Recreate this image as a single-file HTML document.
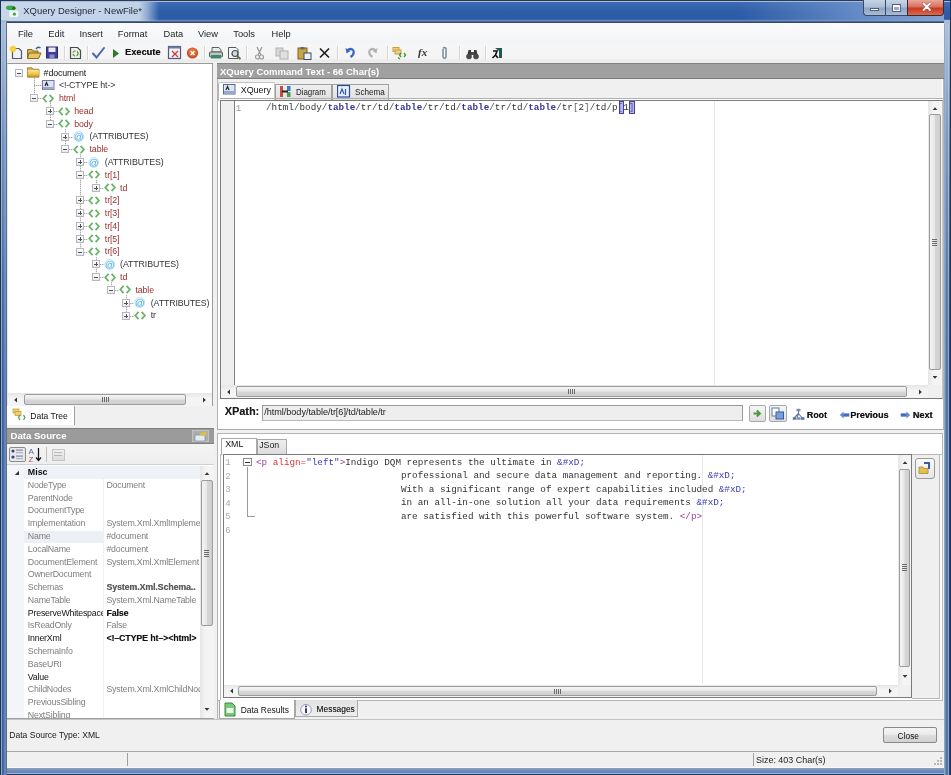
<!DOCTYPE html>
<html><head><meta charset="utf-8"><style>
html,body{margin:0;padding:0;width:951px;height:775px;overflow:hidden;background:#203a58}
#root{position:absolute;left:0;top:0;width:951px;height:775px;overflow:hidden;filter:blur(0.4px)}
div{position:absolute;box-sizing:border-box}
.t{white-space:pre;font-family:"Liberation Sans",sans-serif;}
svg{position:absolute}
</style></head><body>
<div id="root">
<div style="left:0px;top:0px;width:951px;height:775px;background:#5878b4"></div>
<div style="left:0px;top:23px;width:1px;height:752px;background:#1a3550"></div>
<div style="left:1px;top:23px;width:1px;height:752px;background:#8aaac8"></div>
<div style="left:2px;top:23px;width:1px;height:752px;background:#40609c"></div>
<div style="left:3px;top:23px;width:1px;height:752px;background:#4a6aa8"></div>
<div style="left:4px;top:23px;width:1px;height:752px;background:#6080b8"></div>
<div style="left:5px;top:23px;width:1px;height:752px;background:#6a88b8"></div>
<div style="left:6px;top:23px;width:1px;height:752px;background:#5a7088"></div>
<div style="left:944px;top:23px;width:1px;height:752px;background:#90a8c0"></div>
<div style="left:945px;top:23px;width:1px;height:752px;background:#7090b8"></div>
<div style="left:946px;top:23px;width:1px;height:752px;background:#5070a8"></div>
<div style="left:947px;top:23px;width:1px;height:752px;background:#5474ac"></div>
<div style="left:948px;top:23px;width:1px;height:752px;background:#88aadc"></div>
<div style="left:949px;top:23px;width:1px;height:752px;background:#2a4262"></div>
<div style="left:950px;top:23px;width:1px;height:752px;background:#203550"></div>
<div style="left:1px;top:23px;width:5px;height:752px;background:linear-gradient(180deg,rgba(196,210,232,0.8) 0,rgba(196,210,232,0.4) 15%,rgba(196,210,232,0.08) 35%,rgba(196,210,232,0) 50%)"></div>
<div style="left:945px;top:23px;width:5px;height:752px;background:linear-gradient(180deg,rgba(196,210,232,0.8) 0,rgba(196,210,232,0.4) 15%,rgba(196,210,232,0.08) 35%,rgba(196,210,232,0) 50%)"></div>
<div style="left:7px;top:767px;width:937px;height:1px;background:#f8fafc"></div>
<div style="left:7px;top:768px;width:937px;height:1px;background:#90a0b0"></div>
<div style="left:7px;top:769px;width:937px;height:1px;background:#8098b8"></div>
<div style="left:7px;top:770px;width:937px;height:1px;background:#7090c0"></div>
<div style="left:7px;top:771px;width:937px;height:1px;background:#6a88c0"></div>
<div style="left:7px;top:772px;width:937px;height:1px;background:#6a88c0"></div>
<div style="left:7px;top:773px;width:937px;height:1px;background:#9ab4e4"></div>
<div style="left:7px;top:774px;width:937px;height:1px;background:#203a58"></div>
<div style="left:0px;top:0px;width:951px;height:23px;background:linear-gradient(180deg,#2a3a58 0,#2a3a58 1px,#a8bcd8 1px,#a8bcd8 2px,#3d6cb5 2px,#2f5ea8 11px,#2c5aa6 19px,#6f8fc0 21px,#34466a 22px,#34466a 23px)"></div>
<div style="left:1px;top:2px;width:160px;height:19px;background:linear-gradient(90deg,rgba(200,214,234,1) 0,rgba(194,210,230,1) 138px,rgba(170,192,222,0.8) 146px,rgba(120,150,200,0) 158px)"></div>
<div style="left:740px;top:2px;width:204px;height:19px;background:linear-gradient(90deg,rgba(120,156,208,0) 0,rgba(120,156,208,0.75) 60%,rgba(140,170,214,0.9) 100%)"></div>
<div style="left:1px;top:20px;width:6px;height:4px;background:#a9bcd8"></div>
<div style="left:944px;top:20px;width:6px;height:4px;background:#a9bcd8"></div>
<div style="left:6px;top:21px;width:1px;height:3px;background:#6a7f9c"></div>
<div style="left:0px;top:0px;width:1px;height:23px;background:#1a3550"></div>
<div style="left:950px;top:0px;width:1px;height:23px;background:#203550"></div>
<div style="left:7px;top:23px;width:937px;height:744px;background:#f0f0f0"></div>
<div style="left:943px;top:23px;width:1px;height:744px;background:#eef3f9"></div>
<svg style="position:absolute;left:5px;top:4px" width="16" height="15" viewBox="0 0 16 15"><ellipse cx="5.5" cy="3.7" rx="4.6" ry="2.3" fill="#40a850"/><circle cx="8.9" cy="4.3" r="1.7" fill="#2a6a1a"/><rect x="4.3" y="6.6" width="9" height="6.5" rx="1.5" fill="#eafaee"/><circle cx="9.4" cy="10.1" r="1.7" fill="#4aa84a"/></svg>
<div class="t" style="left:23.30px;top:5.77px;font-size:9.45px;line-height:9.45px;color:#1b2536;">XQuery Designer - NewFile*</div>
<div style="left:863px;top:0px;width:23px;height:16px;border:1px solid #3a4a66;border-top:none;border-radius:0 0 0 4px;background:linear-gradient(180deg,#c6d4e6 0,#aebfd6 45%,#8ea6c6 55%,#a8bcd8 100%)"></div>
<div style="left:885px;top:0px;width:23px;height:16px;border:1px solid #3a4a66;border-top:none;background:linear-gradient(180deg,#c6d4e6 0,#aebfd6 45%,#8ea6c6 55%,#a8bcd8 100%)"></div>
<div style="left:907px;top:0px;width:37px;height:16px;border:1px solid #3a2a2a;border-top:none;border-radius:0 0 4px 0;background:linear-gradient(180deg,#e8a898 0,#d87060 45%,#c83a22 55%,#d86a50 100%)"></div>
<div style="left:870px;top:8px;width:9px;height:3px;background:#fff;border:1px solid #52607a"></div>
<div style="left:892px;top:3.5px;width:9px;height:8px;border:1px solid #52607a;background:transparent"></div>
<div style="left:893px;top:4.5px;width:7px;height:6px;border:1px solid #fff;border-top-width:2px;background:#9aaccc"></div>
<svg style="position:absolute;left:920px;top:1px" width="14" height="12" viewBox="0 0 14 12"><path d="M3.5 2.5 L10 9 M10 2.5 L3.5 9" stroke="#7a2a1a" stroke-width="3" stroke-linecap="round" opacity="0.6"/><path d="M3.5 2.5 L10 9 M10 2.5 L3.5 9" stroke="#fff" stroke-width="1.9" stroke-linecap="round"/></svg>
<div style="left:7px;top:23px;width:937px;height:20px;background:linear-gradient(180deg,#fbfbfd 0,#f7f8fa 50%,#f3f4f6 100%)"></div>
<div class="t" style="left:18.00px;top:29.59px;font-size:9.3px;line-height:9.3px;color:#1e1e1e;">File</div>
<div class="t" style="left:48.30px;top:29.59px;font-size:9.3px;line-height:9.3px;color:#1e1e1e;">Edit</div>
<div class="t" style="left:79.50px;top:29.59px;font-size:9.3px;line-height:9.3px;color:#1e1e1e;">Insert</div>
<div class="t" style="left:117.80px;top:29.59px;font-size:9.3px;line-height:9.3px;color:#1e1e1e;">Format</div>
<div class="t" style="left:163.50px;top:29.59px;font-size:9.3px;line-height:9.3px;color:#1e1e1e;">Data</div>
<div class="t" style="left:198.00px;top:29.59px;font-size:9.3px;line-height:9.3px;color:#1e1e1e;">View</div>
<div class="t" style="left:233.30px;top:29.59px;font-size:9.3px;line-height:9.3px;color:#1e1e1e;">Tools</div>
<div class="t" style="left:271.50px;top:29.59px;font-size:9.3px;line-height:9.3px;color:#1e1e1e;">Help</div>
<div style="left:7px;top:43px;width:937px;height:20px;background:linear-gradient(180deg,#f6f6f6 0,#f4f4f4 80%,#e9e9e9 85%,#f0f0f0 100%)"></div>
<svg style="position:absolute;left:9px;top:45px" width="14" height="16" viewBox="0 0 14 16"><path d="M3.5 3.5 H10 L12.5 6 V13.5 H3.5 Z" fill="#f2f2fa" stroke="#4e586e" stroke-width="1.2"/><defs><radialGradient id="star"><stop offset="0" stop-color="#ffe060"/><stop offset="0.55" stop-color="#f8c820"/><stop offset="1" stop-color="#f8c820" stop-opacity="0"/></radialGradient></defs><circle cx="4" cy="4" r="4" fill="url(#star)"/></svg>
<svg style="position:absolute;left:26px;top:45px" width="16" height="16" viewBox="0 0 16 16"><path d="M1.5 4.5 H6 L7 6 H12 V13.5 H1.5 Z" fill="#d6b250" stroke="#8a6a20"/><path d="M3 8 H15 L12.5 13.5 H1.5 Z" fill="#e8c860" stroke="#8a6a20"/><path d="M10 4 Q12 1 14.5 3" stroke="#2a6a8a" stroke-width="1.4" fill="none"/></svg>
<svg style="position:absolute;left:45px;top:45px" width="14" height="16" viewBox="0 0 14 16"><rect x="1.5" y="2" width="11" height="11" fill="#3e3e9e" stroke="#2a2a6a"/><rect x="3.5" y="2.5" width="7" height="4.5" fill="#e8e8f8"/><rect x="4.5" y="9.5" width="5" height="3.5" fill="#8a8ac8"/></svg>
<div style="left:64px;top:46px;width:1px;height:14px;background:#d6d6d6"></div>
<div style="left:65px;top:46px;width:1px;height:14px;background:#fff"></div>
<svg style="position:absolute;left:69px;top:45px" width="13" height="16" viewBox="0 0 13 16"><path d="M1.5 2.5 H8.5 L11.5 5.5 V13.5 H1.5 Z" fill="#eef0ea" stroke="#4a4a4a" stroke-width="1.2"/><circle cx="6.5" cy="8.5" r="2.6" fill="none" stroke="#5a9a4a" stroke-width="1.3" stroke-dasharray="3 1.5"/></svg>
<div style="left:87px;top:46px;width:1px;height:14px;background:#d6d6d6"></div>
<div style="left:88px;top:46px;width:1px;height:14px;background:#fff"></div>
<svg style="position:absolute;left:91px;top:45px" width="15" height="16" viewBox="0 0 15 16"><path d="M2 8.5 L5.5 12.5 L13 3" stroke="#4a64b8" stroke-width="2" fill="none" stroke-linecap="round"/></svg>
<svg style="position:absolute;left:111px;top:45px" width="10" height="16" viewBox="0 0 10 16"><path d="M2 4 L8 8.5 L2 13 Z" fill="#2a7a2a"/></svg>
<div class="t" style="left:125.00px;top:47.94px;font-size:9.25px;line-height:9.25px;color:#111;font-weight:bold;text-shadow:0.3px 0 0 rgba(0,0,0,0.5)">Execute</div>
<svg style="position:absolute;left:167px;top:45px" width="16" height="16" viewBox="0 0 16 16"><rect x="1.5" y="1.5" width="12" height="12" fill="#f4f0f4" stroke="#4a5a80" stroke-width="1.2"/><rect x="1.5" y="1.5" width="12" height="2" fill="#6a7aa0"/><path d="M5 6 L11 12 M11 6 L5 12" stroke="#d03a3a" stroke-width="1.3"/></svg>
<svg style="position:absolute;left:186px;top:45px" width="14" height="16" viewBox="0 0 14 16"><circle cx="6.5" cy="8" r="5.6" fill="#c8502a"/><circle cx="6.5" cy="7.2" r="4.2" fill="#e0703a"/><path d="M4.6 6.1 L8.4 9.9 M8.4 6.1 L4.6 9.9" stroke="#fff" stroke-width="1.4"/></svg>
<div style="left:204px;top:46px;width:1px;height:14px;background:#d6d6d6"></div>
<div style="left:205px;top:46px;width:1px;height:14px;background:#fff"></div>
<svg style="position:absolute;left:208px;top:45px" width="16" height="16" viewBox="0 0 16 16"><path d="M4 2.5 H11 L13 5 V7 H4 Z" fill="#eaeaea" stroke="#606060"/><rect x="1.5" y="7" width="13" height="5" rx="1" fill="#bfc4c8" stroke="#505a5a"/><rect x="3" y="10" width="10" height="3.5" fill="#3a8a6a"/></svg>
<svg style="position:absolute;left:227px;top:45px" width="16" height="16" viewBox="0 0 16 16"><path d="M1.5 2.5 H9 L11 4.5 V13.5 H1.5 Z" fill="#f4f4f4" stroke="#5a5a5a"/><circle cx="8" cy="8.5" r="3" fill="#c8dce8" stroke="#4a4a4a" stroke-width="1.2"/><path d="M10 11 L13.5 14" stroke="#6a6a40" stroke-width="2"/></svg>
<div style="left:246px;top:46px;width:1px;height:14px;background:#d6d6d6"></div>
<div style="left:247px;top:46px;width:1px;height:14px;background:#fff"></div>
<svg style="position:absolute;left:254px;top:45px" width="11" height="16" viewBox="0 0 11 16"><path d="M3 2 L7 10 M8 2 L4 10" stroke="#9a9a9a" stroke-width="1.3"/><circle cx="3.5" cy="12" r="2" fill="none" stroke="#9a9a9a" stroke-width="1.2"/><circle cx="7.5" cy="12" r="2" fill="none" stroke="#9a9a9a" stroke-width="1.2"/></svg>
<svg style="position:absolute;left:275px;top:45px" width="14" height="16" viewBox="0 0 14 16"><rect x="1" y="3" width="7" height="8" fill="#d8d8d8" stroke="#b4b4b4"/><rect x="5" y="6" width="8" height="8" fill="#e0e0e0" stroke="#b0b0b0"/></svg>
<svg style="position:absolute;left:297px;top:45px" width="15" height="16" viewBox="0 0 15 16"><rect x="1" y="3" width="9" height="11" fill="#c8a640" stroke="#7a6020"/><rect x="3.5" y="2" width="4" height="2.5" fill="#6a6a6a"/><rect x="7" y="8" width="7" height="6.5" fill="#eef0f6" stroke="#3a4a70"/></svg>
<svg style="position:absolute;left:318px;top:45px" width="13" height="16" viewBox="0 0 13 16"><path d="M2 3.5 L11 12.5 M11 3.5 L2 12.5" stroke="#1a1a1a" stroke-width="1.6"/></svg>
<div style="left:337px;top:46px;width:1px;height:14px;background:#d6d6d6"></div>
<div style="left:338px;top:46px;width:1px;height:14px;background:#fff"></div>
<svg style="position:absolute;left:344px;top:45px" width="13" height="16" viewBox="0 0 13 16"><path d="M3 6 Q5 3 8.5 4.5 Q11 6.5 8.5 10.5 L6.5 12" stroke="#3a66c0" stroke-width="2.2" fill="none"/><path d="M1.5 3 L2.5 8.5 L6.5 6 Z" fill="#3a66c0"/></svg>
<svg style="position:absolute;left:366px;top:45px" width="13" height="16" viewBox="0 0 13 16"><path d="M10 6 Q8 3 4.5 4.5 Q2 6.5 4.5 10.5 L6.5 12" stroke="#b4b4b4" stroke-width="2.2" fill="none"/><path d="M11.5 3 L10.5 8.5 L6.5 6 Z" fill="#b4b4b4"/></svg>
<div style="left:387px;top:46px;width:1px;height:14px;background:#d6d6d6"></div>
<div style="left:388px;top:46px;width:1px;height:14px;background:#fff"></div>
<svg style="position:absolute;left:392px;top:45px" width="16" height="16" viewBox="0 0 16 16"><rect x="1" y="2.5" width="6" height="4" fill="#f0d080" stroke="#c8a040"/><rect x="3" y="5" width="6" height="4" fill="#f0d080" stroke="#c8a040"/><path d="M9 8 L7.5 10 L9 12 M12 8 L13.5 10 L12 12" stroke="#3a9a3a" stroke-width="1.3" fill="none"/><path d="M6 12.5 L8 14" stroke="#3a9a3a" stroke-width="1.2"/></svg>
<div class="t" style="left:418.00px;top:47.45px;font-size:11px;line-height:11px;color:#333;font-weight:bold;font-family:'Liberation Serif';"><i>fx</i></div>
<svg style="position:absolute;left:440px;top:45px" width="9" height="16" viewBox="0 0 9 16"><path d="M3 4 V12 Q4.5 14.5 6 12 V3.5 Q4.5 1.5 3 3.5" stroke="#7a8aa0" stroke-width="1.5" fill="none"/></svg>
<div style="left:459px;top:46px;width:1px;height:14px;background:#d6d6d6"></div>
<div style="left:460px;top:46px;width:1px;height:14px;background:#fff"></div>
<svg style="position:absolute;left:465px;top:45px" width="15" height="16" viewBox="0 0 15 16"><path d="M2 12 L3.5 5 H6 V12 Z M13 12 L11.5 5 H9 V12 Z" fill="#3a3a3a"/><circle cx="4" cy="11.5" r="2.8" fill="#4a4a4a"/><circle cx="11" cy="11.5" r="2.8" fill="#4a4a4a"/><rect x="6" y="7" width="3" height="3" fill="#4a4a4a"/></svg>
<div style="left:485px;top:46px;width:1px;height:14px;background:#d6d6d6"></div>
<div style="left:486px;top:46px;width:1px;height:14px;background:#fff"></div>
<svg style="position:absolute;left:490px;top:45px" width="14" height="16" viewBox="0 0 14 16"><path d="M5 3 H12 V13 H9 V6 Z" fill="#1f5a50"/><path d="M3 6 L7 6 L5.5 10 L8 13 M5.5 10 L2.5 13" stroke="#111" stroke-width="1.6" fill="none"/></svg>
<div style="left:7px;top:63px;width:206px;height:344px;background:#fff;border:1px solid #9a9a9a;border-left-color:#e4e8ee"></div>
<div style="left:34px;top:78px;width:1px;height:20px;background:repeating-linear-gradient(180deg,#a8a8a8 0,#a8a8a8 1px,#e0e0e0 1px,#e0e0e0 2px)"></div>
<div style="left:50px;top:103px;width:1px;height:21px;background:repeating-linear-gradient(180deg,#a8a8a8 0,#a8a8a8 1px,#e0e0e0 1px,#e0e0e0 2px)"></div>
<div style="left:65px;top:129px;width:1px;height:20px;background:repeating-linear-gradient(180deg,#a8a8a8 0,#a8a8a8 1px,#e0e0e0 1px,#e0e0e0 2px)"></div>
<div style="left:80px;top:154px;width:1px;height:98px;background:repeating-linear-gradient(180deg,#a8a8a8 0,#a8a8a8 1px,#e0e0e0 1px,#e0e0e0 2px)"></div>
<div style="left:96px;top:180px;width:1px;height:8px;background:repeating-linear-gradient(180deg,#a8a8a8 0,#a8a8a8 1px,#e0e0e0 1px,#e0e0e0 2px)"></div>
<div style="left:96px;top:257px;width:1px;height:20px;background:repeating-linear-gradient(180deg,#a8a8a8 0,#a8a8a8 1px,#e0e0e0 1px,#e0e0e0 2px)"></div>
<div style="left:111px;top:282px;width:1px;height:8px;background:repeating-linear-gradient(180deg,#a8a8a8 0,#a8a8a8 1px,#e0e0e0 1px,#e0e0e0 2px)"></div>
<div style="left:126px;top:295px;width:1px;height:21px;background:repeating-linear-gradient(180deg,#a8a8a8 0,#a8a8a8 1px,#e0e0e0 1px,#e0e0e0 2px)"></div>
<div style="left:15px;top:69px;width:8px;height:8px;border:1px solid #b4b8be;background:linear-gradient(180deg,#fff,#e8eaee)"></div>
<div style="left:17px;top:72.5px;width:4px;height:1px;background:#505050"></div>
<svg style="position:absolute;left:27px;top:67px" width="13" height="11" viewBox="0 0 13 11"><defs><linearGradient id="fg" x1="0" y1="0" x2="0" y2="1"><stop offset="0" stop-color="#f6e6a0"/><stop offset="0.6" stop-color="#f0c040"/><stop offset="1" stop-color="#b88a20"/></linearGradient></defs><path d="M0.5 0.8 H5 L6 2.2 H12 V10.2 H0.5 Z" fill="#d8b450" stroke="#9a7a28" stroke-width="0.8"/><rect x="0.8" y="3" width="11" height="7" fill="url(#fg)"/></svg>
<div class="t" style="left:43.60px;top:68.52px;font-size:8.8px;line-height:8.8px;color:#111;letter-spacing:-0.1px">#document</div>
<div style="left:34px;top:85px;width:8px;height:1px;background:repeating-linear-gradient(90deg,#a8a8a8 0,#a8a8a8 1px,#e0e0e0 1px,#e0e0e0 2px)"></div>
<svg style="position:absolute;left:42px;top:80px" width="13" height="11" viewBox="0 0 13 11"><rect x="0.5" y="0.5" width="11.5" height="9" fill="#dde4f2" stroke="#6a7aa6"/><rect x="1" y="7" width="10.5" height="2.5" fill="#9aa8cc"/><path d="M3 6 L4.5 2.5 L6 6" stroke="#222" stroke-width="1.2" fill="none"/></svg>
<div class="t" style="left:58.90px;top:81.30px;font-size:8.8px;line-height:8.8px;color:#333;letter-spacing:-0.1px">&lt;!-CTYPE ht-&gt;</div>
<div style="left:34px;top:98px;width:8px;height:1px;background:repeating-linear-gradient(90deg,#a8a8a8 0,#a8a8a8 1px,#e0e0e0 1px,#e0e0e0 2px)"></div>
<div style="left:30px;top:94px;width:8px;height:8px;border:1px solid #b4b8be;background:linear-gradient(180deg,#fff,#e8eaee)"></div>
<div style="left:32px;top:97.5px;width:4px;height:1px;background:#505050"></div>
<svg style="position:absolute;left:42px;top:93px" width="13" height="11" viewBox="0 0 13 11"><path d="M4.6 1.8 L1.3 5.5 L4.6 9.2" stroke="#6ab46a" stroke-width="1.8" fill="none"/><path d="M7.6 1.8 L10.9 5.5 L7.6 9.2" stroke="#6ab46a" stroke-width="1.8" fill="none"/></svg>
<div class="t" style="left:58.90px;top:94.08px;font-size:8.8px;line-height:8.8px;color:#9a2e2e;letter-spacing:-0.1px">html</div>
<div style="left:50px;top:111px;width:8px;height:1px;background:repeating-linear-gradient(90deg,#a8a8a8 0,#a8a8a8 1px,#e0e0e0 1px,#e0e0e0 2px)"></div>
<div style="left:46px;top:107px;width:8px;height:8px;border:1px solid #b4b8be;background:linear-gradient(180deg,#fff,#e8eaee)"></div>
<div style="left:48px;top:110.5px;width:4px;height:1px;background:#505050"></div>
<div style="left:49.5px;top:109px;width:1px;height:4px;background:#505050"></div>
<svg style="position:absolute;left:58px;top:106px" width="13" height="11" viewBox="0 0 13 11"><path d="M4.6 1.8 L1.3 5.5 L4.6 9.2" stroke="#6ab46a" stroke-width="1.8" fill="none"/><path d="M7.6 1.8 L10.9 5.5 L7.6 9.2" stroke="#6ab46a" stroke-width="1.8" fill="none"/></svg>
<div class="t" style="left:74.20px;top:106.86px;font-size:8.8px;line-height:8.8px;color:#9a2e2e;letter-spacing:-0.1px">head</div>
<div style="left:50px;top:124px;width:8px;height:1px;background:repeating-linear-gradient(90deg,#a8a8a8 0,#a8a8a8 1px,#e0e0e0 1px,#e0e0e0 2px)"></div>
<div style="left:46px;top:120px;width:8px;height:8px;border:1px solid #b4b8be;background:linear-gradient(180deg,#fff,#e8eaee)"></div>
<div style="left:48px;top:123.5px;width:4px;height:1px;background:#505050"></div>
<svg style="position:absolute;left:58px;top:118px" width="13" height="11" viewBox="0 0 13 11"><path d="M4.6 1.8 L1.3 5.5 L4.6 9.2" stroke="#6ab46a" stroke-width="1.8" fill="none"/><path d="M7.6 1.8 L10.9 5.5 L7.6 9.2" stroke="#6ab46a" stroke-width="1.8" fill="none"/></svg>
<div class="t" style="left:74.20px;top:119.64px;font-size:8.8px;line-height:8.8px;color:#9a2e2e;letter-spacing:-0.1px">body</div>
<div style="left:65px;top:137px;width:8px;height:1px;background:repeating-linear-gradient(90deg,#a8a8a8 0,#a8a8a8 1px,#e0e0e0 1px,#e0e0e0 2px)"></div>
<div style="left:61px;top:133px;width:8px;height:8px;border:1px solid #b4b8be;background:linear-gradient(180deg,#fff,#e8eaee)"></div>
<div style="left:63px;top:136.5px;width:4px;height:1px;background:#505050"></div>
<div style="left:64.5px;top:135px;width:1px;height:4px;background:#505050"></div>
<svg style="position:absolute;left:73px;top:131px" width="13" height="11" viewBox="0 0 13 11"><circle cx="5.8" cy="5.5" r="4.9" fill="#f2f9fd" stroke="#b0dcf2" stroke-width="0.9"/><text x="5.8" y="8.6" font-size="9.5" font-family="Liberation Sans" text-anchor="middle" fill="#48ace0">@</text></svg>
<div class="t" style="left:89.50px;top:132.42px;font-size:8.8px;line-height:8.8px;color:#333;letter-spacing:-0.1px">(ATTRIBUTES)</div>
<div style="left:65px;top:149px;width:8px;height:1px;background:repeating-linear-gradient(90deg,#a8a8a8 0,#a8a8a8 1px,#e0e0e0 1px,#e0e0e0 2px)"></div>
<div style="left:61px;top:145px;width:8px;height:8px;border:1px solid #b4b8be;background:linear-gradient(180deg,#fff,#e8eaee)"></div>
<div style="left:63px;top:148.5px;width:4px;height:1px;background:#505050"></div>
<svg style="position:absolute;left:73px;top:144px" width="13" height="11" viewBox="0 0 13 11"><path d="M4.6 1.8 L1.3 5.5 L4.6 9.2" stroke="#6ab46a" stroke-width="1.8" fill="none"/><path d="M7.6 1.8 L10.9 5.5 L7.6 9.2" stroke="#6ab46a" stroke-width="1.8" fill="none"/></svg>
<div class="t" style="left:89.50px;top:145.20px;font-size:8.8px;line-height:8.8px;color:#9a2e2e;letter-spacing:-0.1px">table</div>
<div style="left:80px;top:162px;width:8px;height:1px;background:repeating-linear-gradient(90deg,#a8a8a8 0,#a8a8a8 1px,#e0e0e0 1px,#e0e0e0 2px)"></div>
<div style="left:76px;top:158px;width:8px;height:8px;border:1px solid #b4b8be;background:linear-gradient(180deg,#fff,#e8eaee)"></div>
<div style="left:78px;top:161.5px;width:4px;height:1px;background:#505050"></div>
<div style="left:79.5px;top:160px;width:1px;height:4px;background:#505050"></div>
<svg style="position:absolute;left:88px;top:157px" width="13" height="11" viewBox="0 0 13 11"><circle cx="5.8" cy="5.5" r="4.9" fill="#f2f9fd" stroke="#b0dcf2" stroke-width="0.9"/><text x="5.8" y="8.6" font-size="9.5" font-family="Liberation Sans" text-anchor="middle" fill="#48ace0">@</text></svg>
<div class="t" style="left:104.80px;top:157.98px;font-size:8.8px;line-height:8.8px;color:#333;letter-spacing:-0.1px">(ATTRIBUTES)</div>
<div style="left:80px;top:175px;width:8px;height:1px;background:repeating-linear-gradient(90deg,#a8a8a8 0,#a8a8a8 1px,#e0e0e0 1px,#e0e0e0 2px)"></div>
<div style="left:76px;top:171px;width:8px;height:8px;border:1px solid #b4b8be;background:linear-gradient(180deg,#fff,#e8eaee)"></div>
<div style="left:78px;top:174.5px;width:4px;height:1px;background:#505050"></div>
<svg style="position:absolute;left:88px;top:169px" width="13" height="11" viewBox="0 0 13 11"><path d="M4.6 1.8 L1.3 5.5 L4.6 9.2" stroke="#6ab46a" stroke-width="1.8" fill="none"/><path d="M7.6 1.8 L10.9 5.5 L7.6 9.2" stroke="#6ab46a" stroke-width="1.8" fill="none"/></svg>
<div class="t" style="left:104.80px;top:170.76px;font-size:8.8px;line-height:8.8px;color:#9a2e2e;letter-spacing:-0.1px">tr[1]</div>
<div style="left:96px;top:188px;width:8px;height:1px;background:repeating-linear-gradient(90deg,#a8a8a8 0,#a8a8a8 1px,#e0e0e0 1px,#e0e0e0 2px)"></div>
<div style="left:92px;top:184px;width:8px;height:8px;border:1px solid #b4b8be;background:linear-gradient(180deg,#fff,#e8eaee)"></div>
<div style="left:94px;top:187.5px;width:4px;height:1px;background:#505050"></div>
<div style="left:95.5px;top:186px;width:1px;height:4px;background:#505050"></div>
<svg style="position:absolute;left:104px;top:182px" width="13" height="11" viewBox="0 0 13 11"><path d="M4.6 1.8 L1.3 5.5 L4.6 9.2" stroke="#6ab46a" stroke-width="1.8" fill="none"/><path d="M7.6 1.8 L10.9 5.5 L7.6 9.2" stroke="#6ab46a" stroke-width="1.8" fill="none"/></svg>
<div class="t" style="left:120.10px;top:183.54px;font-size:8.8px;line-height:8.8px;color:#9a2e2e;letter-spacing:-0.1px">td</div>
<div style="left:80px;top:200px;width:8px;height:1px;background:repeating-linear-gradient(90deg,#a8a8a8 0,#a8a8a8 1px,#e0e0e0 1px,#e0e0e0 2px)"></div>
<div style="left:76px;top:196px;width:8px;height:8px;border:1px solid #b4b8be;background:linear-gradient(180deg,#fff,#e8eaee)"></div>
<div style="left:78px;top:199.5px;width:4px;height:1px;background:#505050"></div>
<div style="left:79.5px;top:198px;width:1px;height:4px;background:#505050"></div>
<svg style="position:absolute;left:88px;top:195px" width="13" height="11" viewBox="0 0 13 11"><path d="M4.6 1.8 L1.3 5.5 L4.6 9.2" stroke="#6ab46a" stroke-width="1.8" fill="none"/><path d="M7.6 1.8 L10.9 5.5 L7.6 9.2" stroke="#6ab46a" stroke-width="1.8" fill="none"/></svg>
<div class="t" style="left:104.80px;top:196.32px;font-size:8.8px;line-height:8.8px;color:#9a2e2e;letter-spacing:-0.1px">tr[2]</div>
<div style="left:80px;top:213px;width:8px;height:1px;background:repeating-linear-gradient(90deg,#a8a8a8 0,#a8a8a8 1px,#e0e0e0 1px,#e0e0e0 2px)"></div>
<div style="left:76px;top:209px;width:8px;height:8px;border:1px solid #b4b8be;background:linear-gradient(180deg,#fff,#e8eaee)"></div>
<div style="left:78px;top:212.5px;width:4px;height:1px;background:#505050"></div>
<div style="left:79.5px;top:211px;width:1px;height:4px;background:#505050"></div>
<svg style="position:absolute;left:88px;top:208px" width="13" height="11" viewBox="0 0 13 11"><path d="M4.6 1.8 L1.3 5.5 L4.6 9.2" stroke="#6ab46a" stroke-width="1.8" fill="none"/><path d="M7.6 1.8 L10.9 5.5 L7.6 9.2" stroke="#6ab46a" stroke-width="1.8" fill="none"/></svg>
<div class="t" style="left:104.80px;top:209.10px;font-size:8.8px;line-height:8.8px;color:#9a2e2e;letter-spacing:-0.1px">tr[3]</div>
<div style="left:80px;top:226px;width:8px;height:1px;background:repeating-linear-gradient(90deg,#a8a8a8 0,#a8a8a8 1px,#e0e0e0 1px,#e0e0e0 2px)"></div>
<div style="left:76px;top:222px;width:8px;height:8px;border:1px solid #b4b8be;background:linear-gradient(180deg,#fff,#e8eaee)"></div>
<div style="left:78px;top:225.5px;width:4px;height:1px;background:#505050"></div>
<div style="left:79.5px;top:224px;width:1px;height:4px;background:#505050"></div>
<svg style="position:absolute;left:88px;top:221px" width="13" height="11" viewBox="0 0 13 11"><path d="M4.6 1.8 L1.3 5.5 L4.6 9.2" stroke="#6ab46a" stroke-width="1.8" fill="none"/><path d="M7.6 1.8 L10.9 5.5 L7.6 9.2" stroke="#6ab46a" stroke-width="1.8" fill="none"/></svg>
<div class="t" style="left:104.80px;top:221.88px;font-size:8.8px;line-height:8.8px;color:#9a2e2e;letter-spacing:-0.1px">tr[4]</div>
<div style="left:80px;top:239px;width:8px;height:1px;background:repeating-linear-gradient(90deg,#a8a8a8 0,#a8a8a8 1px,#e0e0e0 1px,#e0e0e0 2px)"></div>
<div style="left:76px;top:235px;width:8px;height:8px;border:1px solid #b4b8be;background:linear-gradient(180deg,#fff,#e8eaee)"></div>
<div style="left:78px;top:238.5px;width:4px;height:1px;background:#505050"></div>
<div style="left:79.5px;top:237px;width:1px;height:4px;background:#505050"></div>
<svg style="position:absolute;left:88px;top:233px" width="13" height="11" viewBox="0 0 13 11"><path d="M4.6 1.8 L1.3 5.5 L4.6 9.2" stroke="#6ab46a" stroke-width="1.8" fill="none"/><path d="M7.6 1.8 L10.9 5.5 L7.6 9.2" stroke="#6ab46a" stroke-width="1.8" fill="none"/></svg>
<div class="t" style="left:104.80px;top:234.66px;font-size:8.8px;line-height:8.8px;color:#9a2e2e;letter-spacing:-0.1px">tr[5]</div>
<div style="left:80px;top:252px;width:8px;height:1px;background:repeating-linear-gradient(90deg,#a8a8a8 0,#a8a8a8 1px,#e0e0e0 1px,#e0e0e0 2px)"></div>
<div style="left:76px;top:248px;width:8px;height:8px;border:1px solid #b4b8be;background:linear-gradient(180deg,#fff,#e8eaee)"></div>
<div style="left:78px;top:251.5px;width:4px;height:1px;background:#505050"></div>
<svg style="position:absolute;left:88px;top:246px" width="13" height="11" viewBox="0 0 13 11"><path d="M4.6 1.8 L1.3 5.5 L4.6 9.2" stroke="#6ab46a" stroke-width="1.8" fill="none"/><path d="M7.6 1.8 L10.9 5.5 L7.6 9.2" stroke="#6ab46a" stroke-width="1.8" fill="none"/></svg>
<div class="t" style="left:104.80px;top:247.44px;font-size:8.8px;line-height:8.8px;color:#9a2e2e;letter-spacing:-0.1px">tr[6]</div>
<div style="left:96px;top:264px;width:8px;height:1px;background:repeating-linear-gradient(90deg,#a8a8a8 0,#a8a8a8 1px,#e0e0e0 1px,#e0e0e0 2px)"></div>
<div style="left:92px;top:260px;width:8px;height:8px;border:1px solid #b4b8be;background:linear-gradient(180deg,#fff,#e8eaee)"></div>
<div style="left:94px;top:263.5px;width:4px;height:1px;background:#505050"></div>
<div style="left:95.5px;top:262px;width:1px;height:4px;background:#505050"></div>
<svg style="position:absolute;left:104px;top:259px" width="13" height="11" viewBox="0 0 13 11"><circle cx="5.8" cy="5.5" r="4.9" fill="#f2f9fd" stroke="#b0dcf2" stroke-width="0.9"/><text x="5.8" y="8.6" font-size="9.5" font-family="Liberation Sans" text-anchor="middle" fill="#48ace0">@</text></svg>
<div class="t" style="left:120.10px;top:260.22px;font-size:8.8px;line-height:8.8px;color:#333;letter-spacing:-0.1px">(ATTRIBUTES)</div>
<div style="left:96px;top:277px;width:8px;height:1px;background:repeating-linear-gradient(90deg,#a8a8a8 0,#a8a8a8 1px,#e0e0e0 1px,#e0e0e0 2px)"></div>
<div style="left:92px;top:273px;width:8px;height:8px;border:1px solid #b4b8be;background:linear-gradient(180deg,#fff,#e8eaee)"></div>
<div style="left:94px;top:276.5px;width:4px;height:1px;background:#505050"></div>
<svg style="position:absolute;left:104px;top:272px" width="13" height="11" viewBox="0 0 13 11"><path d="M4.6 1.8 L1.3 5.5 L4.6 9.2" stroke="#6ab46a" stroke-width="1.8" fill="none"/><path d="M7.6 1.8 L10.9 5.5 L7.6 9.2" stroke="#6ab46a" stroke-width="1.8" fill="none"/></svg>
<div class="t" style="left:120.10px;top:273.00px;font-size:8.8px;line-height:8.8px;color:#9a2e2e;letter-spacing:-0.1px">td</div>
<div style="left:111px;top:290px;width:8px;height:1px;background:repeating-linear-gradient(90deg,#a8a8a8 0,#a8a8a8 1px,#e0e0e0 1px,#e0e0e0 2px)"></div>
<div style="left:107px;top:286px;width:8px;height:8px;border:1px solid #b4b8be;background:linear-gradient(180deg,#fff,#e8eaee)"></div>
<div style="left:109px;top:289.5px;width:4px;height:1px;background:#505050"></div>
<svg style="position:absolute;left:119px;top:284px" width="13" height="11" viewBox="0 0 13 11"><path d="M4.6 1.8 L1.3 5.5 L4.6 9.2" stroke="#6ab46a" stroke-width="1.8" fill="none"/><path d="M7.6 1.8 L10.9 5.5 L7.6 9.2" stroke="#6ab46a" stroke-width="1.8" fill="none"/></svg>
<div class="t" style="left:135.40px;top:285.78px;font-size:8.8px;line-height:8.8px;color:#9a2e2e;letter-spacing:-0.1px">table</div>
<div style="left:126px;top:303px;width:8px;height:1px;background:repeating-linear-gradient(90deg,#a8a8a8 0,#a8a8a8 1px,#e0e0e0 1px,#e0e0e0 2px)"></div>
<div style="left:122px;top:299px;width:8px;height:8px;border:1px solid #b4b8be;background:linear-gradient(180deg,#fff,#e8eaee)"></div>
<div style="left:124px;top:302.5px;width:4px;height:1px;background:#505050"></div>
<div style="left:125.5px;top:301px;width:1px;height:4px;background:#505050"></div>
<svg style="position:absolute;left:134px;top:297px" width="13" height="11" viewBox="0 0 13 11"><circle cx="5.8" cy="5.5" r="4.9" fill="#f2f9fd" stroke="#b0dcf2" stroke-width="0.9"/><text x="5.8" y="8.6" font-size="9.5" font-family="Liberation Sans" text-anchor="middle" fill="#48ace0">@</text></svg>
<div class="t" style="left:150.70px;top:298.56px;font-size:8.8px;line-height:8.8px;color:#333;letter-spacing:-0.1px">(ATTRIBUTES)</div>
<div style="left:126px;top:316px;width:8px;height:1px;background:repeating-linear-gradient(90deg,#a8a8a8 0,#a8a8a8 1px,#e0e0e0 1px,#e0e0e0 2px)"></div>
<div style="left:122px;top:312px;width:8px;height:8px;border:1px solid #b4b8be;background:linear-gradient(180deg,#fff,#e8eaee)"></div>
<div style="left:124px;top:315.5px;width:4px;height:1px;background:#505050"></div>
<div style="left:125.5px;top:314px;width:1px;height:4px;background:#505050"></div>
<svg style="position:absolute;left:134px;top:310px" width="13" height="11" viewBox="0 0 13 11"><path d="M4.6 1.8 L1.3 5.5 L4.6 9.2" stroke="#6ab46a" stroke-width="1.8" fill="none"/><path d="M7.6 1.8 L10.9 5.5 L7.6 9.2" stroke="#6ab46a" stroke-width="1.8" fill="none"/></svg>
<div class="t" style="left:150.70px;top:311.34px;font-size:8.8px;line-height:8.8px;color:#333;letter-spacing:-0.1px">tr</div>
<div style="left:8px;top:393px;width:204px;height:13px;background:linear-gradient(180deg,#e6e6e6,#f4f4f4 40%,#f4f4f4)"></div>
<div style="left:24px;top:394px;width:162px;height:11px;border:1px solid #9c9c9c;border-radius:2px;background:linear-gradient(180deg,#f4f4f4 0,#e8e8e8 45%,#d6d6d6 55%,#cfcfcf 100%)"></div>
<div style="left:102px;top:397px;width:1px;height:5px;background:#6a6a6a"></div>
<div style="left:104px;top:397px;width:1px;height:5px;background:#6a6a6a"></div>
<div style="left:106px;top:397px;width:1px;height:5px;background:#6a6a6a"></div>
<div style="left:108px;top:397px;width:1px;height:5px;background:#6a6a6a"></div>
<svg style="position:absolute;left:13px;top:396.5px" width="6" height="6" viewBox="0 0 6 6"><path d="M4 0.6 L1.2 3 L4 5.4 Z" fill="#333"/></svg>
<svg style="position:absolute;left:201px;top:396.5px" width="6" height="6" viewBox="0 0 6 6"><path d="M2 0.6 L4.8 3 L2 5.4 Z" fill="#333"/></svg>
<div style="left:7px;top:406px;width:207px;height:20px;background:#f0f0f0"></div>
<div style="left:7px;top:406px;width:68px;height:19px;background:#fff;border-right:1px solid #a0a0a0"></div>
<svg style="position:absolute;left:12px;top:408px" width="16" height="15" viewBox="0 0 16 15"><rect x="1" y="1" width="6" height="4" fill="#f0d070" stroke="#c8a040" stroke-width="0.8"/><rect x="3" y="3.5" width="6" height="4" fill="#f0d070" stroke="#c8a040" stroke-width="0.8"/><path d="M8 7 L6.5 9.5 L8 12 M11.5 7 L13 9.5 L11.5 12" stroke="#4aa04a" stroke-width="1.2" fill="none"/></svg>
<div class="t" style="left:30.30px;top:412.13px;font-size:8.55px;line-height:8.55px;color:#111;">Data Tree</div>
<div style="left:7px;top:428px;width:207px;height:16px;background:#9b9b9b;border-top:1px solid #7e7e7e;border-bottom:1px solid #7e7e7e"></div>
<div class="t" style="left:10.50px;top:431.44px;font-size:9.6px;line-height:9.6px;color:#fff;font-weight:bold;">Data Source</div>
<div style="left:192px;top:429.5px;width:17px;height:12.5px;background:rgba(220,230,210,0.25);border:1px solid rgba(230,240,220,0.35)"></div>
<svg style="position:absolute;left:192px;top:430px" width="18" height="12" viewBox="0 0 18 12"><rect x="3" y="5" width="10" height="6" fill="#e6eaf4" stroke="#8a94b4" stroke-width="0.8"/><path d="M7 5 Q10 1 15 2.5 L13.5 6 Z" fill="#e0c040"/></svg>
<div style="left:7px;top:444px;width:207px;height:21px;background:linear-gradient(180deg,#f4f4f4,#eeeeee);border-bottom:1px solid #d0d0d0"></div>
<div style="left:8.5px;top:446.5px;width:17.5px;height:15.5px;border:1px solid #8a8a8a;border-radius:2px;background:#ece6ea"></div>
<svg style="position:absolute;left:10px;top:448px" width="15" height="13" viewBox="0 0 15 13"><circle cx="3" cy="3" r="1.6" fill="#2a4a7a"/><circle cx="3" cy="9" r="1.6" fill="#2a4a7a"/><rect x="6" y="1.5" width="7" height="1.2" fill="#7a8aa0"/><rect x="6" y="4" width="7" height="1.2" fill="#aab4c4"/><rect x="6" y="7.5" width="7" height="1.2" fill="#7a8aa0"/><rect x="6" y="10" width="7" height="1.2" fill="#aab4c4"/></svg>
<svg style="position:absolute;left:28px;top:446px" width="14" height="17" viewBox="0 0 14 17"><text x="0.5" y="8" font-size="8" font-family="Liberation Sans" fill="#4a6ab0">A</text><text x="0.5" y="15.5" font-size="8" font-family="Liberation Sans" fill="#b04a6a">Z</text><path d="M10.5 2 V14 M8 11.5 L10.5 14.5 L13 11.5" stroke="#111" stroke-width="1.2" fill="none"/></svg>
<div style="left:46px;top:447px;width:1px;height:15px;background:#c0c0c0"></div>
<div style="left:51.5px;top:448.5px;width:13px;height:12px;border:1px solid #c4c4c4;background:linear-gradient(180deg,#f0f0f0,#dcdcdc)"></div>
<div style="left:54px;top:452px;width:8px;height:1px;background:#b8b8b8"></div>
<div style="left:54px;top:455px;width:8px;height:1px;background:#b8b8b8"></div>
<div style="left:7px;top:465px;width:207px;height:254px;background:#fff;border-bottom:1px solid #a0a0a0"></div>
<div style="left:7px;top:465px;width:17px;height:253px;background:#f3f5f9"></div>
<div style="left:24px;top:466px;width:177px;height:13px;background:#eef1f7"></div>
<svg style="position:absolute;left:12px;top:469px" width="9" height="8" viewBox="0 0 9 8"><path d="M7 1.8 L7 6 L2.8 6 Z" fill="#333"/></svg>
<div class="t" style="left:27.80px;top:468.04px;font-size:8.9px;line-height:8.9px;color:#111;font-weight:bold;">Misc</div>
<div style="left:24px;top:530.5px;width:79px;height:12px;background:#eceff6"></div>
<div style="left:24px;top:466px;width:79px;height:252px;overflow:hidden">
<div class="t" style="left:3.8px;top:14.90px;font-size:8.8px;line-height:8.8px;color:#7e7e7e;letter-spacing:-0.2px">NodeType</div>
<div class="t" style="left:3.8px;top:27.68px;font-size:8.8px;line-height:8.8px;color:#7e7e7e;letter-spacing:-0.2px">ParentNode</div>
<div class="t" style="left:3.8px;top:40.46px;font-size:8.8px;line-height:8.8px;color:#7e7e7e;letter-spacing:-0.2px">DocumentType</div>
<div class="t" style="left:3.8px;top:53.24px;font-size:8.8px;line-height:8.8px;color:#7e7e7e;letter-spacing:-0.2px">Implementation</div>
<div class="t" style="left:3.8px;top:66.02px;font-size:8.8px;line-height:8.8px;color:#7e7e7e;letter-spacing:-0.2px">Name</div>
<div class="t" style="left:3.8px;top:78.80px;font-size:8.8px;line-height:8.8px;color:#7e7e7e;letter-spacing:-0.2px">LocalName</div>
<div class="t" style="left:3.8px;top:91.58px;font-size:8.8px;line-height:8.8px;color:#7e7e7e;letter-spacing:-0.2px">DocumentElement</div>
<div class="t" style="left:3.8px;top:104.36px;font-size:8.8px;line-height:8.8px;color:#7e7e7e;letter-spacing:-0.2px">OwnerDocument</div>
<div class="t" style="left:3.8px;top:117.14px;font-size:8.8px;line-height:8.8px;color:#7e7e7e;letter-spacing:-0.2px">Schemas</div>
<div class="t" style="left:3.8px;top:129.92px;font-size:8.8px;line-height:8.8px;color:#7e7e7e;letter-spacing:-0.2px">NameTable</div>
<div class="t" style="left:3.8px;top:142.70px;font-size:8.8px;line-height:8.8px;color:#111;letter-spacing:-0.2px">PreserveWhitespace</div>
<div class="t" style="left:3.8px;top:155.48px;font-size:8.8px;line-height:8.8px;color:#7e7e7e;letter-spacing:-0.2px">IsReadOnly</div>
<div class="t" style="left:3.8px;top:168.26px;font-size:8.8px;line-height:8.8px;color:#111;letter-spacing:-0.2px">InnerXml</div>
<div class="t" style="left:3.8px;top:181.04px;font-size:8.8px;line-height:8.8px;color:#7e7e7e;letter-spacing:-0.2px">SchemaInfo</div>
<div class="t" style="left:3.8px;top:193.82px;font-size:8.8px;line-height:8.8px;color:#7e7e7e;letter-spacing:-0.2px">BaseURI</div>
<div class="t" style="left:3.8px;top:206.60px;font-size:8.8px;line-height:8.8px;color:#111;letter-spacing:-0.2px">Value</div>
<div class="t" style="left:3.8px;top:219.38px;font-size:8.8px;line-height:8.8px;color:#7e7e7e;letter-spacing:-0.2px">ChildNodes</div>
<div class="t" style="left:3.8px;top:232.16px;font-size:8.8px;line-height:8.8px;color:#7e7e7e;letter-spacing:-0.2px">PreviousSibling</div>
<div class="t" style="left:3.8px;top:244.94px;font-size:8.8px;line-height:8.8px;color:#7e7e7e;letter-spacing:-0.2px">NextSibling</div>
</div>
<div style="left:103px;top:466px;width:97px;height:252px;overflow:hidden">
<div class="t" style="left:3.4px;top:14.90px;font-size:8.8px;line-height:8.8px;color:#7e7e7e;letter-spacing:-0.2px;">Document</div>
<div class="t" style="left:3.4px;top:27.68px;font-size:8.8px;line-height:8.8px;color:#7e7e7e;letter-spacing:-0.2px;"></div>
<div class="t" style="left:3.4px;top:40.46px;font-size:8.8px;line-height:8.8px;color:#7e7e7e;letter-spacing:-0.2px;"></div>
<div class="t" style="left:3.4px;top:53.24px;font-size:8.8px;line-height:8.8px;color:#7e7e7e;letter-spacing:-0.2px;">System.Xml.XmlImplementation</div>
<div class="t" style="left:3.4px;top:66.02px;font-size:8.8px;line-height:8.8px;color:#7e7e7e;letter-spacing:-0.2px;">#document</div>
<div class="t" style="left:3.4px;top:78.80px;font-size:8.8px;line-height:8.8px;color:#7e7e7e;letter-spacing:-0.2px;">#document</div>
<div class="t" style="left:3.4px;top:91.58px;font-size:8.8px;line-height:8.8px;color:#7e7e7e;letter-spacing:-0.2px;">System.Xml.XmlElement</div>
<div class="t" style="left:3.4px;top:104.36px;font-size:8.8px;line-height:8.8px;color:#7e7e7e;letter-spacing:-0.2px;"></div>
<div class="t" style="left:3.4px;top:117.14px;font-size:8.8px;line-height:8.8px;color:#5a5a5a;font-weight:bold;letter-spacing:-0.1px;text-shadow:0.3px 0 0 rgba(0,0,0,0.45);">System.Xml.Schema..</div>
<div class="t" style="left:3.4px;top:129.92px;font-size:8.8px;line-height:8.8px;color:#7e7e7e;letter-spacing:-0.2px;">System.Xml.NameTable</div>
<div class="t" style="left:3.4px;top:142.70px;font-size:8.8px;line-height:8.8px;color:#111;font-weight:bold;letter-spacing:-0.1px;text-shadow:0.3px 0 0 rgba(0,0,0,0.45);">False</div>
<div class="t" style="left:3.4px;top:155.48px;font-size:8.8px;line-height:8.8px;color:#7e7e7e;letter-spacing:-0.2px;">False</div>
<div class="t" style="left:3.4px;top:168.26px;font-size:8.8px;line-height:8.8px;color:#111;font-weight:bold;letter-spacing:-0.1px;text-shadow:0.3px 0 0 rgba(0,0,0,0.45);">&lt;!&#8211;CTYPE ht&#8211;&gt;&lt;html&gt;</div>
<div class="t" style="left:3.4px;top:181.04px;font-size:8.8px;line-height:8.8px;color:#7e7e7e;letter-spacing:-0.2px;"></div>
<div class="t" style="left:3.4px;top:193.82px;font-size:8.8px;line-height:8.8px;color:#7e7e7e;letter-spacing:-0.2px;"></div>
<div class="t" style="left:3.4px;top:206.60px;font-size:8.8px;line-height:8.8px;color:#7e7e7e;letter-spacing:-0.2px;"></div>
<div class="t" style="left:3.4px;top:219.38px;font-size:8.8px;line-height:8.8px;color:#7e7e7e;letter-spacing:-0.2px;">System.Xml.XmlChildNodes</div>
<div class="t" style="left:3.4px;top:232.16px;font-size:8.8px;line-height:8.8px;color:#7e7e7e;letter-spacing:-0.2px;"></div>
<div class="t" style="left:3.4px;top:244.94px;font-size:8.8px;line-height:8.8px;color:#7e7e7e;letter-spacing:-0.2px;"></div>
</div>
<div style="left:103px;top:479px;width:1px;height:239px;background:#f0f0f0"></div>
<div style="left:200px;top:466px;width:14px;height:252px;background:linear-gradient(90deg,#e6e6e6,#f4f4f4 40%,#f4f4f4)"></div>
<div style="left:201px;top:480px;width:12px;height:146px;border:1px solid #9c9c9c;border-radius:2px;background:linear-gradient(90deg,#f4f4f4 0,#e8e8e8 45%,#d6d6d6 55%,#cfcfcf 100%)"></div>
<div style="left:204px;top:550px;width:5px;height:1px;background:#6a6a6a"></div>
<div style="left:204px;top:552px;width:5px;height:1px;background:#6a6a6a"></div>
<div style="left:204px;top:554px;width:5px;height:1px;background:#6a6a6a"></div>
<div style="left:204px;top:556px;width:5px;height:1px;background:#6a6a6a"></div>
<svg style="position:absolute;left:204.0px;top:471px" width="6" height="6" viewBox="0 0 6 6"><path d="M0.6 4 L3 1.2 L5.4 4 Z" fill="#333"/></svg>
<svg style="position:absolute;left:204.0px;top:706px" width="6" height="6" viewBox="0 0 6 6"><path d="M0.6 2 L3 4.8 L5.4 2 Z" fill="#333"/></svg>
<div class="t" style="left:9.30px;top:731.33px;font-size:8.55px;line-height:8.55px;color:#1a1a1a;">Data Source Type: XML</div>
<div style="left:216.5px;top:63px;width:727.5px;height:16px;background:#a0a0a0;border-top:1px solid #808080;border-bottom:1px solid #7a7a7a"></div>
<div class="t" style="left:220.00px;top:66.72px;font-size:9.5px;line-height:9.5px;color:#fff;font-weight:bold;">XQuery Command Text - 66 Char(s)</div>
<div style="left:217px;top:79px;width:727px;height:351px;background:#fff;border-left:1px solid #b4b4b4;border-right:1px solid #b4b4b4;border-bottom:1px solid #a8a8a8"></div>
<div style="left:218px;top:79px;width:724px;height:20px;background:#f0f0f0"></div>
<div style="left:217.5px;top:81.5px;width:57px;height:19px;background:#fff;border:1px solid #c4c4c4;border-bottom:none;border-left-color:#b4b4b4;border-radius:2px 2px 0 0"></div>
<svg style="position:absolute;left:223px;top:84px" width="13" height="11" viewBox="0 0 13 11"><rect x="0.5" y="0.5" width="11.5" height="9.5" fill="#dde4f2" stroke="#5a6a96"/><rect x="1" y="7" width="10.5" height="3" fill="#9aa8cc"/><path d="M3 6 L4.5 2.5 L6 6" stroke="#222" stroke-width="1.2" fill="none"/></svg>
<div class="t" style="left:240.80px;top:86.23px;font-size:8.9px;line-height:8.9px;color:#111;">XQuery</div>
<div style="left:274.5px;top:83.5px;width:57.5px;height:16px;background:linear-gradient(180deg,#f0f0f0,#dedede);border:1px solid #a0a0a0;border-bottom:none"></div>
<svg style="position:absolute;left:279px;top:85px" width="13" height="13" viewBox="0 0 13 13"><rect x="1" y="1" width="3" height="11" fill="#c84a3a"/><rect x="8" y="1" width="3.5" height="5" fill="#3a7ac8"/><rect x="8" y="7" width="3.5" height="5" fill="#4aa04a"/><rect x="3" y="5.5" width="6" height="2" fill="#222"/></svg>
<div class="t" style="left:296.30px;top:87.53px;font-size:8.9px;line-height:8.9px;color:#1a1a1a;transform:scaleX(0.885);transform-origin:0 0;">Diagram</div>
<div style="left:332px;top:83.5px;width:56.5px;height:16px;background:linear-gradient(180deg,#f0f0f0,#dedede);border:1px solid #a0a0a0;border-bottom:none"></div>
<svg style="position:absolute;left:336.5px;top:85px" width="14" height="13" viewBox="0 0 14 13"><rect x="0.5" y="0.5" width="12" height="11.5" fill="#e8f0fb" stroke="#2a4a9a" stroke-width="1.2"/><path d="M3 9 L5 4 L7 9 M8.5 4 V10" stroke="#2a5ab0" stroke-width="1.2" fill="none"/></svg>
<div class="t" style="left:354.90px;top:87.53px;font-size:8.9px;line-height:8.9px;color:#1a1a1a;transform:scaleX(0.915);transform-origin:0 0;">Schema</div>
<div style="left:220px;top:98px;width:723px;height:1px;background:#b0b0b0"></div>
<div style="left:220px;top:99.5px;width:723px;height:299.5px;background:#fff;border:1px solid #7a7a7a;border-right-color:#c8c8c8"></div>
<div style="left:221px;top:100.5px;width:14px;height:285px;background:#efefef;border-right:1px solid #7e7e7e"></div>
<div class="t" style="left:235.80px;top:104.31px;font-size:9.2px;line-height:9.2px;color:#9a9a9a;font-family:'Liberation Mono';">1</div>
<div style="left:714px;top:100.5px;width:1px;height:285px;background:#e6e6e6"></div>
<div class="t" style="left:265.70px;top:102.78px;font-size:9.9px;line-height:9.9px;color:#333;font-family:'Liberation Mono';transform:scaleX(0.9409);transform-origin:0 0;"><span style="color:#4a5a4a">/</span><span style="color:#333">html</span><span style="color:#4a5a4a">/</span><span style="color:#333">body</span><span style="color:#4a5a4a">/</span><b style="color:#35359a">table</b><span style="color:#4a5a4a">/</span><span style="color:#333">tr</span><span style="color:#4a5a4a">/</span><span style="color:#333">td</span><span style="color:#4a5a4a">/</span><b style="color:#35359a">table</b><span style="color:#4a5a4a">/</span><span style="color:#333">tr</span><span style="color:#4a5a4a">/</span><span style="color:#333">td</span><span style="color:#4a5a4a">/</span><b style="color:#35359a">table</b><span style="color:#4a5a4a">/</span><span style="color:#333">tr</span><span style="color:#4a5a4a">/</span><span style="color:#333">td</span><span style="color:#4a5a4a">/</span><b style="color:#35359a">table</b><span style="color:#4a5a4a">/</span><span style="color:#333">tr</span><span style="color:#5a6a5a">[</span><span style="color:#333">2</span><span style="color:#5a6a5a">]</span><span style="color:#4a5a4a">/</span><span style="color:#333">td</span><span style="color:#4a5a4a">/</span><span style="color:#333">p</span><span style="color:#333">[1]</span></div>
<div style="left:618.6px;top:101.2px;width:5.6px;height:12.6px;border:1px solid #4040a8;background:rgba(110,110,210,0.5)"></div>
<div style="left:629.2px;top:101.2px;width:5.6px;height:12.6px;border:1px solid #4040a8;background:rgba(110,110,210,0.5)"></div>
<div style="left:928px;top:100.5px;width:14px;height:285px;background:linear-gradient(90deg,#e6e6e6,#f4f4f4 40%,#f4f4f4)"></div>
<div style="left:929px;top:114px;width:12px;height:256px;border:1px solid #9c9c9c;border-radius:2px;background:linear-gradient(90deg,#f4f4f4 0,#e8e8e8 45%,#d6d6d6 55%,#cfcfcf 100%)"></div>
<div style="left:932px;top:239px;width:5px;height:1px;background:#6a6a6a"></div>
<div style="left:932px;top:241px;width:5px;height:1px;background:#6a6a6a"></div>
<div style="left:932px;top:243px;width:5px;height:1px;background:#6a6a6a"></div>
<div style="left:932px;top:245px;width:5px;height:1px;background:#6a6a6a"></div>
<svg style="position:absolute;left:932.0px;top:105.5px" width="6" height="6" viewBox="0 0 6 6"><path d="M0.6 4 L3 1.2 L5.4 4 Z" fill="#333"/></svg>
<svg style="position:absolute;left:932.0px;top:373.5px" width="6" height="6" viewBox="0 0 6 6"><path d="M0.6 2 L3 4.8 L5.4 2 Z" fill="#333"/></svg>
<div style="left:221px;top:385px;width:707px;height:13px;background:linear-gradient(180deg,#e6e6e6,#f4f4f4 40%,#f4f4f4)"></div>
<div style="left:235.5px;top:386px;width:671.0px;height:11px;border:1px solid #9c9c9c;border-radius:2px;background:linear-gradient(180deg,#f4f4f4 0,#e8e8e8 45%,#d6d6d6 55%,#cfcfcf 100%)"></div>
<div style="left:568.0px;top:389px;width:1px;height:5px;background:#6a6a6a"></div>
<div style="left:570.0px;top:389px;width:1px;height:5px;background:#6a6a6a"></div>
<div style="left:572.0px;top:389px;width:1px;height:5px;background:#6a6a6a"></div>
<div style="left:574.0px;top:389px;width:1px;height:5px;background:#6a6a6a"></div>
<svg style="position:absolute;left:226px;top:388.5px" width="6" height="6" viewBox="0 0 6 6"><path d="M4 0.6 L1.2 3 L4 5.4 Z" fill="#333"/></svg>
<svg style="position:absolute;left:917px;top:388.5px" width="6" height="6" viewBox="0 0 6 6"><path d="M2 0.6 L4.8 3 L2 5.4 Z" fill="#333"/></svg>
<div style="left:928px;top:385px;width:14px;height:13px;background:#f0f0f0"></div>
<div class="t" style="left:224.80px;top:406.28px;font-size:10.85px;line-height:10.85px;color:#1a1a1a;font-weight:bold;text-shadow:0.3px 0 0 rgba(0,0,0,0.5)">XPath:</div>
<div style="left:262.3px;top:405.3px;width:480.5px;height:16px;background:#eeeeee;border:1px solid #999999;border-bottom-color:#b8b8b8"></div>
<div class="t" style="left:264.30px;top:408.42px;font-size:9.15px;line-height:9.15px;color:#222;letter-spacing:-0.05px">/html/body/table/tr[6]/td/table/tr</div>
<div style="left:748.8px;top:405px;width:17px;height:17px;border:1px solid #a8a8a8;border-radius:2px;background:linear-gradient(180deg,#f6f6f6,#dedede)"></div>
<svg style="position:absolute;left:751px;top:408px" width="13" height="11" viewBox="0 0 13 11"><path d="M2.5 5.5 H8 M5.8 2.5 L9 5.5 L5.8 8.5" stroke="#4a9a3a" stroke-width="1.9" fill="none"/></svg>
<div style="left:769.3px;top:405px;width:17.5px;height:17px;border:1px solid #a8a8a8;border-radius:2px;background:linear-gradient(180deg,#f6f6f6,#dedede)"></div>
<svg style="position:absolute;left:771px;top:407px" width="14" height="13" viewBox="0 0 14 13"><rect x="1" y="1" width="7" height="8" fill="#fff" stroke="#5a7ab0"/><rect x="5" y="5" width="7.5" height="7" fill="#7aa0dc" stroke="#3a5aa0"/></svg>
<svg style="position:absolute;left:792px;top:408px" width="14" height="13" viewBox="0 0 14 13"><rect x="4.5" y="0.8" width="4" height="2.4" fill="#7a8aa8"/><path d="M6.5 3 V5.5 M6.5 5.5 L5.2 9.5 M6.5 5.5 L9.8 9.5 M6.5 5.5 L2.5 9.5" stroke="#6a7a98" stroke-width="1.1" fill="none"/><rect x="0.8" y="9.2" width="3.6" height="2.6" fill="#5a74a8"/><rect x="4.8" y="9.2" width="3.6" height="2.6" fill="#7a90c0"/><rect x="8.8" y="9.2" width="3.6" height="2.6" fill="#5a74a8"/></svg>
<div class="t" style="left:806.80px;top:411.02px;font-size:8.8px;line-height:8.8px;color:#111;font-weight:bold;text-shadow:0.35px 0 0 rgba(0,0,0,0.6)">Root</div>
<svg style="position:absolute;left:838.5px;top:410px" width="11" height="10" viewBox="0 0 11 10"><path d="M0.8 5 L4.6 1.6 V3.6 H10.2 V6.4 H4.6 V8.4 Z" fill="#6a8ad8"/><path d="M4.6 3.6 H10.2 V6.4 H4.6" fill="#4a6ac0"/></svg>
<div class="t" style="left:850.20px;top:410.79px;font-size:9.07px;line-height:9.07px;color:#111;font-weight:bold;text-shadow:0.35px 0 0 rgba(0,0,0,0.6)">Previous</div>
<svg style="position:absolute;left:899.5px;top:410px" width="11" height="10" viewBox="0 0 11 10"><path d="M10.2 5 L6.4 1.6 V3.6 H0.8 V6.4 H6.4 V8.4 Z" fill="#6a8ad8"/><path d="M6.4 3.6 H0.8 V6.4 H6.4" fill="#4a6ac0"/></svg>
<div class="t" style="left:912.80px;top:410.78px;font-size:9.08px;line-height:9.08px;color:#111;font-weight:bold;text-shadow:0.35px 0 0 rgba(0,0,0,0.6)">Next</div>
<div style="left:217px;top:433px;width:726px;height:268px;background:#fff;border:1px solid #b4b4b4"></div>
<div style="left:216.5px;top:700px;width:1px;height:19px;background:#b4b4b4"></div>
<div style="left:220px;top:453.5px;width:722.5px;height:247px;background:#fff;border:1px solid #b8b8b8"></div>
<div style="left:220.5px;top:437.5px;width:36px;height:17px;background:#fff;border:1px solid #a8a8a8;border-bottom:none"></div>
<div class="t" style="left:225.20px;top:440.04px;font-size:8.9px;line-height:8.9px;color:#111;">XML</div>
<div style="left:256.5px;top:438.5px;width:30.5px;height:15.5px;background:linear-gradient(180deg,#eeeeee,#dcdcdc);border:1px solid #a8a8a8;border-bottom:none"></div>
<div class="t" style="left:259.20px;top:441.32px;font-size:8.8px;line-height:8.8px;color:#222;">JSon</div>
<div style="left:911.5px;top:453.5px;width:28.5px;height:245.5px;background:#efefef;border:1px solid #b8b8b8;border-left:none"></div>
<div style="left:223px;top:454px;width:689px;height:243.5px;background:#fff;border:1px solid #7a7a7a"></div>
<div style="left:915.2px;top:457.5px;width:19.7px;height:21.3px;border:1px solid #9a9a9a;border-radius:3px;background:linear-gradient(180deg,#fafafa,#e6e6e6)"></div>
<svg style="position:absolute;left:917px;top:460px" width="16" height="16" viewBox="0 0 16 16"><path d="M7 2 H13 V9 H11 V4 H7 Z" fill="#3a5ab0"/><path d="M2 7 H6 L7 8.5 H11 V13.5 H2 Z" fill="#e0c050" stroke="#a88a30" stroke-width="0.8"/></svg>
<div style="left:702.3px;top:455px;width:1px;height:229px;background:#e8e8e8"></div>
<div class="t" style="left:225.30px;top:458.96px;font-size:9.0px;line-height:9.0px;color:#ababab;font-family:'Liberation Mono';">1</div>
<div class="t" style="left:225.30px;top:472.58px;font-size:9.0px;line-height:9.0px;color:#ababab;font-family:'Liberation Mono';">2</div>
<div class="t" style="left:225.30px;top:486.20px;font-size:9.0px;line-height:9.0px;color:#ababab;font-family:'Liberation Mono';">3</div>
<div class="t" style="left:225.30px;top:499.82px;font-size:9.0px;line-height:9.0px;color:#ababab;font-family:'Liberation Mono';">4</div>
<div class="t" style="left:225.30px;top:513.44px;font-size:9.0px;line-height:9.0px;color:#ababab;font-family:'Liberation Mono';">5</div>
<div class="t" style="left:225.30px;top:527.06px;font-size:9.0px;line-height:9.0px;color:#ababab;font-family:'Liberation Mono';">6</div>
<div style="left:243.4px;top:457.9px;width:8.6px;height:8.6px;border:1px solid #8a8a8a;background:#fff"></div>
<div style="left:245.4px;top:461.7px;width:4.6px;height:1px;background:#333"></div>
<div style="left:247.2px;top:466.5px;width:1px;height:50px;background:#9a9a9a"></div>
<div style="left:247.2px;top:516px;width:8px;height:1px;background:#9a9a9a"></div>
<div class="t" style="left:255.50px;top:457.68px;font-size:9.9px;line-height:9.9px;color:#333;font-family:'Liberation Mono';transform:scaleX(0.9409);transform-origin:0 0;"><span style="color:#9a3aa0">&lt;p </span><span style="color:#d83a3a">align=</span><span style="color:#3a3ab8">"left"</span><span style="color:#9a3aa0">&gt;</span><span style="color:#333">Indigo DQM represents the ultimate in </span><span style="color:#3a3ab8">&amp;#xD;</span></div>
<div class="t" style="left:255.50px;top:471.24px;font-size:9.9px;line-height:9.9px;color:#333;font-family:'Liberation Mono';transform:scaleX(0.9409);transform-origin:0 0;">                          <span style="color:#333">professional and secure data management and reporting. </span><span style="color:#3a3ab8">&amp;#xD;</span></div>
<div class="t" style="left:255.50px;top:484.80px;font-size:9.9px;line-height:9.9px;color:#333;font-family:'Liberation Mono';transform:scaleX(0.9409);transform-origin:0 0;">                          <span style="color:#333">With a significant range of expert capabilities included </span><span style="color:#3a3ab8">&amp;#xD;</span></div>
<div class="t" style="left:255.50px;top:498.36px;font-size:9.9px;line-height:9.9px;color:#333;font-family:'Liberation Mono';transform:scaleX(0.9409);transform-origin:0 0;">                          <span style="color:#333">in an all-in-one solution all your data requirements </span><span style="color:#3a3ab8">&amp;#xD;</span></div>
<div class="t" style="left:255.50px;top:511.92px;font-size:9.9px;line-height:9.9px;color:#333;font-family:'Liberation Mono';transform:scaleX(0.9409);transform-origin:0 0;">                          <span style="color:#333">are satisfied with this powerful software system. </span><span style="color:#9a3aa0">&lt;/p&gt;</span></div>
<div style="left:898px;top:455px;width:13px;height:229.5px;background:linear-gradient(90deg,#e6e6e6,#f4f4f4 40%,#f4f4f4)"></div>
<div style="left:899px;top:468.5px;width:11px;height:198.5px;border:1px solid #9c9c9c;border-radius:2px;background:linear-gradient(90deg,#f4f4f4 0,#e8e8e8 45%,#d6d6d6 55%,#cfcfcf 100%)"></div>
<div style="left:902px;top:564.0px;width:5px;height:1px;background:#6a6a6a"></div>
<div style="left:902px;top:566.0px;width:5px;height:1px;background:#6a6a6a"></div>
<div style="left:902px;top:568.0px;width:5px;height:1px;background:#6a6a6a"></div>
<div style="left:902px;top:570.0px;width:5px;height:1px;background:#6a6a6a"></div>
<svg style="position:absolute;left:901.5px;top:460px" width="6" height="6" viewBox="0 0 6 6"><path d="M0.6 4 L3 1.2 L5.4 4 Z" fill="#333"/></svg>
<svg style="position:absolute;left:901.5px;top:672.5px" width="6" height="6" viewBox="0 0 6 6"><path d="M0.6 2 L3 4.8 L5.4 2 Z" fill="#333"/></svg>
<div style="left:224px;top:684.5px;width:674px;height:12.5px;background:linear-gradient(180deg,#e6e6e6,#f4f4f4 40%,#f4f4f4)"></div>
<div style="left:238px;top:685.5px;width:639px;height:10.5px;border:1px solid #9c9c9c;border-radius:2px;background:linear-gradient(180deg,#f4f4f4 0,#e8e8e8 45%,#d6d6d6 55%,#cfcfcf 100%)"></div>
<div style="left:554px;top:688.5px;width:1px;height:5px;background:#6a6a6a"></div>
<div style="left:556px;top:688.5px;width:1px;height:5px;background:#6a6a6a"></div>
<div style="left:558px;top:688.5px;width:1px;height:5px;background:#6a6a6a"></div>
<div style="left:560px;top:688.5px;width:1px;height:5px;background:#6a6a6a"></div>
<svg style="position:absolute;left:229px;top:687.75px" width="6" height="6" viewBox="0 0 6 6"><path d="M4 0.6 L1.2 3 L4 5.4 Z" fill="#333"/></svg>
<svg style="position:absolute;left:887px;top:687.75px" width="6" height="6" viewBox="0 0 6 6"><path d="M2 0.6 L4.8 3 L2 5.4 Z" fill="#333"/></svg>
<div style="left:898px;top:684.5px;width:13px;height:12px;background:#f0f0f0"></div>
<div style="left:219px;top:700px;width:76px;height:18.5px;background:#fff;border:1px solid #a8a8a8;border-top:none"></div>
<svg style="position:absolute;left:224px;top:702px" width="12" height="15" viewBox="0 0 12 15"><path d="M1 1 H8 L11 4 V14 H1 Z" fill="#7ac87a" stroke="#3a8a3a"/><rect x="2.5" y="6" width="7" height="5" fill="#e8f8e8"/></svg>
<div class="t" style="left:240.70px;top:706.33px;font-size:8.44px;line-height:8.44px;color:#111;">Data Results</div>
<div style="left:294.5px;top:700px;width:63.5px;height:16.5px;background:linear-gradient(180deg,#e2e2e2,#eeeeee);border:1px solid #a8a8a8;border-top:none"></div>
<svg style="position:absolute;left:298.5px;top:703px" width="14" height="14" viewBox="0 0 14 14"><circle cx="7" cy="6.8" r="5.3" fill="#fbfbff" stroke="#9a9ab8" stroke-width="1"/><rect x="6.1" y="5.3" width="1.8" height="4.8" fill="#222a70"/><circle cx="7" cy="3.6" r="1" fill="#222a70"/></svg>
<div class="t" style="left:316.60px;top:705.46px;font-size:8.4px;line-height:8.4px;color:#111;text-shadow:0 0 0.4px rgba(0,0,0,0.35)">Messages</div>
<div style="left:7px;top:719px;width:937px;height:1px;background:#c4c4c4"></div>
<div style="left:882.6px;top:727.4px;width:54px;height:15.4px;border:1px solid #8a8a8a;border-radius:2px;background:linear-gradient(180deg,#f4f4f4 0,#ebebeb 45%,#dcdcdc 55%,#d2d2d2 100%)"></div>
<div class="t" style="left:897.60px;top:731.76px;font-size:8.4px;line-height:8.4px;color:#111;">Close</div>
<div style="left:7px;top:751px;width:937px;height:1px;background:#a8a8a8"></div>
<div style="left:7px;top:752px;width:937px;height:15px;background:#f0f0f0"></div>
<div style="left:127px;top:753px;width:1px;height:13px;background:#a0a0a0"></div>
<div style="left:753.3px;top:753px;width:1px;height:13px;background:#a0a0a0"></div>
<div class="t" style="left:756.00px;top:756.39px;font-size:8.95px;line-height:8.95px;color:#222;">Size: 403 Char(s)</div>
<div style="left:940px;top:757px;width:2px;height:2px;background:#b8b8b8"></div>
<div style="left:940px;top:760px;width:2px;height:2px;background:#b8b8b8"></div>
<div style="left:940px;top:763px;width:2px;height:2px;background:#b8b8b8"></div>
<div style="left:937px;top:760px;width:2px;height:2px;background:#b8b8b8"></div>
<div style="left:937px;top:763px;width:2px;height:2px;background:#b8b8b8"></div>
<div style="left:934px;top:763px;width:2px;height:2px;background:#b8b8b8"></div>
</div>
</body></html>
